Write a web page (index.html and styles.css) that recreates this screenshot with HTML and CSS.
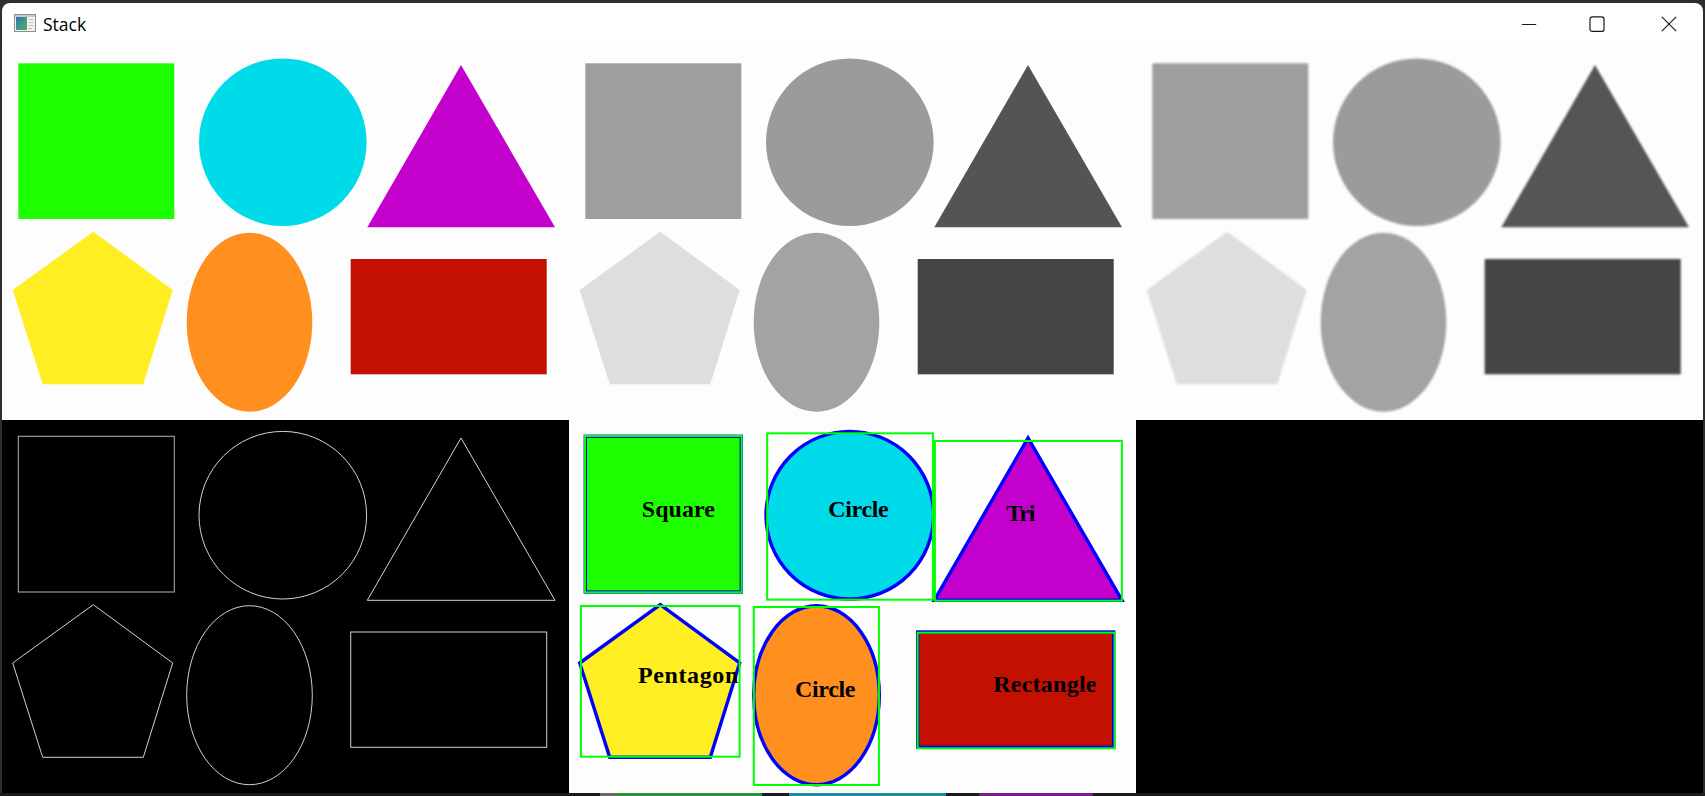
FILE: index.html
```html
<!DOCTYPE html>
<html>
<head>
<meta charset="utf-8">
<title>Stack</title>
<link rel="stylesheet" href="styles.css">
</head>
<body>
<div class="window">
  <div class="titlebar">
    <div class="title-left">
      <svg class="app-icon" width="22" height="18" viewBox="0 0 22 18">
        <defs>
          <linearGradient id="icg" x1="0" y1="0" x2="1" y2="1">
            <stop offset="0" stop-color="#2f6fb8"/>
            <stop offset="0.55" stop-color="#3f9a8a"/>
            <stop offset="1" stop-color="#5aa84a"/>
          </linearGradient>
        </defs>
        <rect x="0.5" y="0.5" width="21" height="17" fill="#f3f3f3" stroke="#8e8e8e"/>
        <rect x="1" y="1" width="20" height="2" fill="#c9c9c9"/>
        <rect x="2" y="3" width="11" height="13" fill="url(#icg)"/>
        <rect x="14.5" y="5" width="5" height="1" fill="#b8c4c8"/>
        <rect x="14.5" y="8" width="5" height="1" fill="#b8c8b8"/>
        <rect x="14.5" y="11" width="5" height="1" fill="#b8c4c8"/>
        <rect x="14.5" y="14" width="3" height="1" fill="#8fc08f"/>
      </svg>
      <span class="title">Stack</span>
    </div>
    <div class="caption">
      <div class="cbtn cbtn-min">
        <svg width="16" height="16" viewBox="0 0 16 16"><path d="M0.8 8.5H15.2" stroke="#1a1a1a" stroke-width="1.1" fill="none"/></svg>
      </div>
      <div class="cbtn cbtn-max">
        <svg width="16" height="16" viewBox="0 0 16 16"><rect x="1" y="0.8" width="14" height="14.6" rx="2.2" stroke="#1a1a1a" stroke-width="1.2" fill="none"/></svg>
      </div>
      <div class="cbtn cbtn-close">
        <svg width="16" height="16" viewBox="0 0 16 16"><path d="M0.8 0.8L15.2 15.2M15.2 0.8L0.8 15.2" stroke="#1a1a1a" stroke-width="1.15" fill="none"/></svg>
      </div>
    </div>
  </div>

  <div class="stack">
    <!-- original image -->
    <svg class="panel panel-img" width="567" height="373" viewBox="0 0 567 373">
      <defs>
        <rect id="sq" x="16.3" y="16.3" width="156" height="155.7"/>
        <circle id="ci" cx="280.8" cy="95.2" r="83.8"/>
        <polygon id="tr" points="459,18 365.3,180.3 553,180.3"/>
        <polygon id="pe" points="91.3,184.7 170.7,243 141.3,337.3 40.7,337.3 10.7,243"/>
        <ellipse id="el" cx="247.5" cy="275.2" rx="62.8" ry="89.5"/>
        <rect id="re" x="348.7" y="212" width="196" height="115.3"/>
        <filter id="blur" x="-5%" y="-5%" width="110%" height="110%">
          <feGaussianBlur stdDeviation="1.3"/>
        </filter>
      </defs>
      <use href="#sq" fill="#1eff00"/>
      <use href="#ci" fill="#00dbe9"/>
      <use href="#tr" fill="#c300cc"/>
      <use href="#pe" fill="#ffee22"/>
      <use href="#el" fill="#ff8f1f"/>
      <use href="#re" fill="#c31000"/>
    </svg>

    <!-- gray -->
    <svg class="panel panel-img" width="567" height="373" viewBox="0 0 567 373">
      <use href="#sq" fill="#9e9e9e"/>
      <use href="#ci" fill="#9b9b9b"/>
      <use href="#tr" fill="#545454"/>
      <use href="#pe" fill="#dedede"/>
      <use href="#el" fill="#a3a3a3"/>
      <use href="#re" fill="#444444"/>
    </svg>

    <!-- blurred gray -->
    <svg class="panel panel-img" width="567" height="373" viewBox="0 0 567 373">
      <g filter="url(#blur)">
        <use href="#sq" fill="#9e9e9e"/>
        <use href="#ci" fill="#9b9b9b"/>
        <use href="#tr" fill="#545454"/>
        <use href="#pe" fill="#dedede"/>
        <use href="#el" fill="#a3a3a3"/>
        <use href="#re" fill="#444444"/>
      </g>
    </svg>

    <!-- canny -->
    <svg class="panel panel-black" width="567" height="373" viewBox="0 0 567 373">
      <g fill="none" stroke="#d2d2d2" stroke-width="1">
        <use href="#sq" stroke="#b4b4b4"/>
        <use href="#ci"/>
        <use href="#tr"/>
        <use href="#pe"/>
        <use href="#el"/>
        <use href="#re"/>
      </g>
    </svg>

    <!-- contours -->
    <svg class="panel panel-img" width="567" height="373" viewBox="0 0 567 373">
      <g stroke="#0000ff" stroke-width="3.4">
        <use href="#sq" fill="#1eff00"/>
        <use href="#ci" fill="#00dbe9"/>
        <use href="#tr" fill="#c300cc"/>
        <use href="#pe" fill="#ffee22"/>
        <use href="#el" fill="#ff8f1f"/>
        <use href="#re" fill="#c31000"/>
      </g>
      <g fill="none" stroke="#00ff00" stroke-width="2">
        <rect x="16" y="16" width="156.7" height="156.3"/>
        <rect x="198.2" y="13.3" width="165.7" height="166.4"/>
        <rect x="365.9" y="21" width="187" height="159.7"/>
        <rect x="11.9" y="186" width="158.7" height="150.7"/>
        <rect x="184.8" y="187" width="125.1" height="178"/>
        <rect x="348.6" y="212.7" width="197" height="115.6"/>
      </g>
      <g class="lbl">
        <text x="72.7" y="97" textLength="73.3">Square</text>
        <text x="259.2" y="97.3" textLength="60.5">Circle</text>
        <text x="437.2" y="100.7" textLength="29.1">Tri</text>
        <text x="69" y="262.7" textLength="100.3">Pentagon</text>
        <text x="226" y="277.3" textLength="60.4">Circle</text>
        <text x="424.2" y="271.7" textLength="103.3">Rectangle</text>
      </g>
    </svg>

    <!-- blank -->
    <svg class="panel panel-black" width="567" height="373" viewBox="0 0 567 373"></svg>
  </div>
</div>
<div class="desk"></div>
</body>
</html>
```

FILE: styles.css
```css
html, body {
  margin: 0;
  padding: 0;
}

body {
  width: 1705px;
  height: 796px;
  overflow: hidden;
  box-sizing: border-box;
  padding: 3px 2px 0 2px;
  background: #2e2e2e;
  font-family: "Open Sans", "Noto Sans", "DejaVu Sans", sans-serif;
}

.window {
  width: 1701px;
  background: #ffffff;
  border-radius: 8px 8px 0 0;
  overflow: hidden;
}

.titlebar {
  height: 44px;
  display: flex;
  align-items: center;
  justify-content: space-between;
}

.title-left {
  display: flex;
  align-items: center;
  gap: 7px;
  padding-left: 12px;
}

.app-icon {
  display: block;
  margin-bottom: 4px;
}

.title {
  font-size: 17.5px;
  color: #000;
  line-height: 1;
}

.caption {
  display: flex;
  align-self: flex-start;
  height: 41px;
}

.cbtn {
  width: 69px;
  height: 41px;
  display: flex;
  align-items: center;
  justify-content: center;
}

.cbtn svg {
  display: block;
}

.cbtn-min svg {
  margin-right: 3px;
}

.cbtn-max svg {
  margin-right: 5px;
}

.stack {
  display: grid;
  grid-template-columns: repeat(3, 567px);
  grid-template-rows: repeat(2, 373px);
}

.panel {
  display: block;
  width: 567px;
  height: 373px;
}

.panel-img {
  background: #fdfdfd;
}

.panel-black {
  background: #000000;
}

.lbl {
  font-family: "Liberation Serif", "Times New Roman", serif;
  font-weight: bold;
  font-size: 24px;
  fill: #000000;
}

.desk {
  height: 3px;
  margin: 0 -2px;
  background: linear-gradient(to right,
    #1c1c1c 0px, #1c1c1c 600px,
    #6a6a6a 600px, #6a6a6a 615px,
    #2f8f3a 615px, #2f8f3a 762px,
    #1c1c1c 762px, #1c1c1c 789px,
    #1e8f9a 789px, #1e8f9a 946px,
    #1c1c1c 946px, #1c1c1c 979px,
    #7a1f8a 979px, #7a1f8a 1093px,
    #1c1c1c 1093px, #1c1c1c 1705px);
}
```
